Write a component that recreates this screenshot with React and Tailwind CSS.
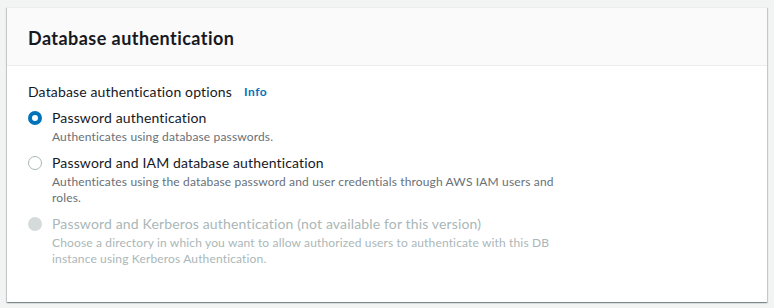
export default function App() {
  const options = [
    {
      title: 'Password authentication',
      desc: ['Authenticates using database passwords.'],
      checked: true,
    },
    {
      title: 'Password and IAM database authentication',
      desc: [
        'Authenticates using the database password and user credentials through AWS IAM users and',
        'roles.',
      ],
    },
    {
      title: 'Password and Kerberos authentication (not available for this version)',
      desc: [
        'Choose a directory in which you want to allow authorized users to authenticate with this DB',
        'instance using Kerberos Authentication.',
      ],
      disabled: true,
    },
  ]

  return (
    <div className="min-h-screen bg-[#f2f3f3] p-[7px] font-['Lato','Liberation_Sans',sans-serif] text-[#16191f]">
      <div className="bg-white border-t border-[#eaeded] shadow-[0_1px_1px_0_rgba(0,28,36,0.3),1px_1px_1px_0_rgba(0,28,36,0.15),-1px_1px_1px_0_rgba(0,28,36,0.15)]">
        <div className="h-[58px] bg-[#fafafa] border-b border-[#eaeded] flex items-center px-[21px]">
          <h2 className="text-[18px] font-bold leading-[22px] tracking-[0.45px] mt-[2px]">Database authentication</h2>
        </div>
        <div className="px-[21px] pt-[16px] pb-[35px]">
          <div className="flex items-center gap-[12px] h-[20px]">
            <span className="text-[14px] leading-[20px] tracking-[0.15px]">Database authentication options</span>
            <span className="text-[12px] font-bold text-[#0073bb] tracking-[0.5px]">Info</span>
          </div>
          <div className="mt-[6px] flex flex-col gap-[8px]">
            {options.map((o) => (
              <div key={o.title} className="flex gap-[10px]">
                <div className="pt-[3px]">
                  {o.checked ? (
                    <div className="w-[14px] h-[14px] rounded-full border-[4px] border-[#0073bb] bg-white" />
                  ) : o.disabled ? (
                    <div className="w-[14px] h-[14px] rounded-full bg-[#d5dbdb]" />
                  ) : (
                    <div className="w-[14px] h-[14px] rounded-full border-[1.5px] border-[#aab7b8] bg-white" />
                  )}
                </div>
                <div>
                  <div className={`text-[14px] leading-[20px] tracking-[0.15px] ${o.disabled ? 'text-[#aab7b8]' : 'text-[#16191f]'}`}>
                    {o.title}
                  </div>
                  <div className={`text-[12px] leading-[16px] mt-[1px] tracking-[0.15px] ${o.disabled ? 'text-[#aab7b8]' : 'text-[#687078]'}`}>
                    {o.desc.map((d, i) => (
                      <div key={i}>{d}</div>
                    ))}
                  </div>
                </div>
              </div>
            ))}
          </div>
        </div>
      </div>
    </div>
  )
}
